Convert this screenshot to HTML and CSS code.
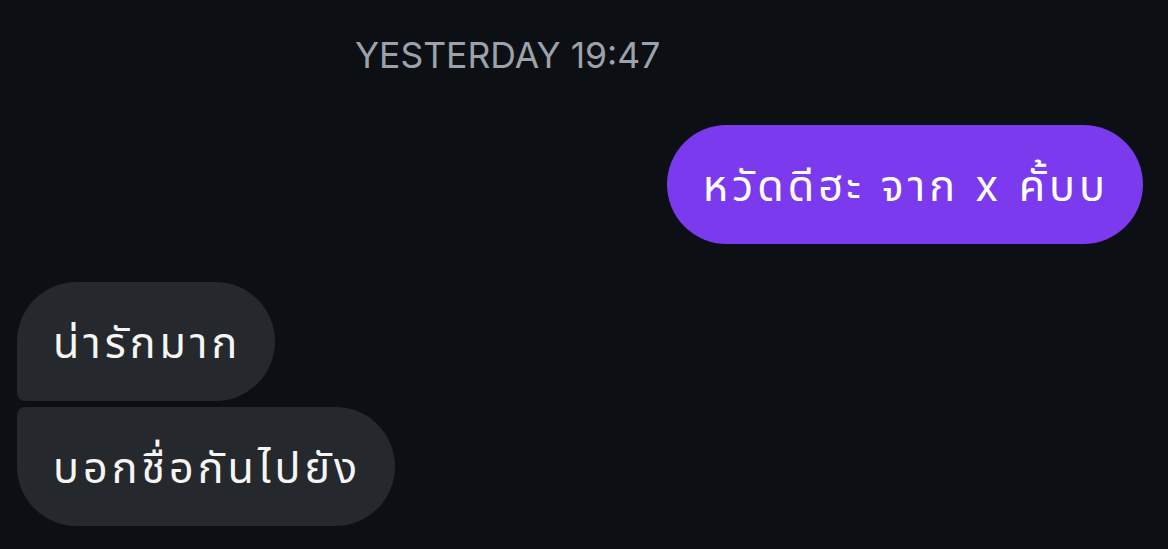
FILE: index.html
```html
<!DOCTYPE html>
<html lang="th">
<head>
<meta charset="utf-8">
<link rel="stylesheet" href="styles.css">
</head>
<body>
<div class="chat">
  <div class="stamp">YESTERDAY 19:47</div>
  <div class="row out">
    <div class="bubble sent">หวัดดีฮะ จาก x คั้บบ</div>
  </div>
  <div class="group in">
    <div class="bubble recv first">น่ารักมาก</div>
    <div class="bubble recv last">บอกชื่อกันไปยัง</div>
  </div>
</div>
</body>
</html>
```
FILE: styles.css
```css
html, body {
  margin: 0;
  padding: 0;
  background: #0c1014;
  height: 100%;
}
body {
  font-family: "Inter", "Noto Sans Thai", "Noto Sans", sans-serif;
  color: #ffffff;
}
.chat {
  display: flex;
  flex-direction: column;
  padding: 0 25px 0 17px;
}
.stamp {
  align-self: flex-start;
  margin-left: 338px;
  padding-top: 37px;
  height: 38px;
  line-height: 38px;
  font-size: 35.5px;
  color: #9da2aa;
}
.row.out {
  display: flex;
  justify-content: flex-end;
  margin-top: 50px;
}
.bubble {
  height: 119px;
  box-sizing: border-box;
  display: flex;
  align-items: center;
  font-size: 43px;
  letter-spacing: 4px;
  padding: 5px 34px 0 36px;
  white-space: nowrap;
}
.sent {
  background: #7c3aef;
  border-radius: 60px;
}
.group.in {
  margin-top: 38px;
  display: flex;
  flex-direction: column;
  align-items: flex-start;
  gap: 6px;
}
.recv {
  background: #25282c;
  color: #f5f5f5;
}
.recv.first {
  border-radius: 60px 60px 60px 8px;
}
.recv.last {
  border-radius: 8px 60px 60px 60px;
}
```
